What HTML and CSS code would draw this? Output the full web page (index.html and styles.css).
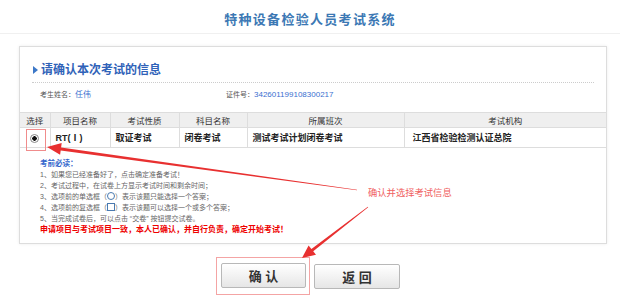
FILE: index.html
```html
<!DOCTYPE html>
<html>
<head>
    <title>特种设备检验人员考试系统</title>
    <meta charset="UTF-8">
    <link rel="stylesheet" href="styles.css">
</head>
<body>
    <div class="top">
        <h1>特种设备检验人员考试系统</h1>
    </div>

    <div class="panel">
        <div class="head"><span class="marker"></span>请确认本次考试的信息</div>
        <div class="info">
            <div class="info-item first">考生姓名：<span class="val name">任伟</span></div>
            <div class="info-item">证件号：<span class="val">342601199108300217</span></div>
        </div>

        <table class="exam">
            <colgroup>
                <col style="width:30px">
                <col style="width:60px">
                <col style="width:69px">
                <col style="width:68px">
                <col style="width:157px">
                <col style="width:202px">
            </colgroup>
            <tr>
                <th>选择</th>
                <th>项目名称</th>
                <th>考试性质</th>
                <th>科目名称</th>
                <th>所属班次</th>
                <th>考试机构</th>
            </tr>
            <tr>
                <td class="pick"><span class="radio"></span><span class="mark"></span></td>
                <td>RT(Ⅰ)</td>
                <td>取证考试</td>
                <td>闭卷考试</td>
                <td>测试考试计划闭卷考试</td>
                <td class="org">江西省检验检测认证总院</td>
            </tr>
        </table>

        <div class="notes">
            <div class="notes-title">考前必读：</div>
            <div>1、如果您已经准备好了，点击确定准备考试！</div>
            <div>2、考试过程中，在试卷上方显示考试时间和剩余时间；</div>
            <div>3、选项前的单选框（<span class="ico circle"></span>）表示该题只能选择一个答案；</div>
            <div>4、选项前的复选框（<span class="ico square"></span>）表示该题可以选择一个或多个答案；</div>
            <div>5、当完成试卷后，可以点击 “交卷” 按钮提交试卷。</div>
            <div class="warn">申请项目与考试项目一致，本人已确认，并自行负责，确定开始考试！</div>
        </div>
    </div>

    <div class="actions">
        <span class="btn-mark"><button class="btn">确 认</button></span>
        <button class="btn">返 回</button>
    </div>

    <span class="tip">确认并选择考试信息</span>
    <svg class="arrows" width="620" height="306" viewBox="0 0 620 306">
        <polygon points="357,190.3 357,189.7 61.1,147.4 61.7,143 47,147 60.1,154.8 60.7,150.4" fill="#e83030"/>
        <polygon points="368.2,207.2 367.8,206.8 311.4,248.9 308.6,245.4 302,258 316,254.8 313.2,251.3" fill="#e83030"/>
    </svg>
</body>
</html>
```

FILE: styles.css
```css
body {
    font-family: "Liberation Sans", "Noto Sans CJK SC", sans-serif;
    margin: 0;
    padding: 0;
    background: #ffffff;
    color: #333;
    position: relative;
}
.top {
    height: 34px;
    box-sizing: border-box;
    padding-top: 13px;
    border-bottom: 1px solid #f0f0f0;
    text-align: center;
}
.top h1 {
    margin: 0;
    font-size: 13px;
    line-height: 14px;
    letter-spacing: 1.3px;
    color: #3c78b4;
}
.panel {
    margin: 12px 13px 0 19px;
    border: 1px solid #dddddd;
    box-shadow: 0 0 3px rgba(0, 0, 0, 0.08);
    padding-bottom: 8px;
}
.head {
    margin: 0 12px;
    height: 36px;
    box-sizing: border-box;
    padding: 11px 0 0 1px;
    border-bottom: 1px dotted #cccccc;
    font-size: 12px;
    line-height: 16px;
    font-weight: bold;
    color: #2f62b8;
    display: flex;
    align-items: center;
    align-self: flex-start;
}
.marker {
    width: 0;
    height: 0;
    border-top: 4px solid transparent;
    border-bottom: 4px solid transparent;
    border-left: 5px solid #3c78c8;
    margin-right: 3px;
}
.info {
    display: flex;
    margin: 6px 0 11px;
    padding-left: 20px;
    font-size: 7px;
    line-height: 12px;
    color: #555;
}
.info-item.first {
    width: 186px;
}
.val {
    font-size: 8px;
    color: #3a6fd0;
}
.exam {
    width: 100%;
    table-layout: fixed;
    border-collapse: collapse;
}
.exam th,
.exam td {
    border: 1px solid #dddddd;
    white-space: nowrap;
    overflow: visible;
}
.exam tr th:first-child,
.exam tr td:first-child {
    border-left: none;
}
.exam tr th:last-child,
.exam tr td:last-child {
    border-right: none;
}
.exam th {
    height: 14px;
    padding: 0;
    background: #efefef;
    font-size: 8.5px;
    font-weight: normal;
    color: #333;
}
.exam td {
    height: 19px;
    padding: 0 0 0 5px;
    font-size: 9px;
    font-weight: bold;
    color: #222;
}
.exam td.org {
    padding-left: 8px;
}
.exam td.pick {
    position: relative;
    padding: 0;
    text-align: center;
}
.radio {
    display: inline-block;
    width: 7px;
    height: 7px;
    border: 1px solid #8a8a8a;
    border-radius: 50%;
    background: radial-gradient(circle, #111 0, #111 2px, #fff 2.5px);
    vertical-align: middle;
}
.mark {
    position: absolute;
    left: 6px;
    top: 1px;
    width: 18px;
    height: 20px;
    border: 1px solid #f08c8c;
}
.notes {
    margin-top: 10px;
    padding-left: 20px;
    font-size: 7px;
    line-height: 11px;
    color: #666;
}
.notes-title {
    font-size: 7.5px;
    font-weight: bold;
    color: #3366cc;
}
.ico {
    display: inline-block;
    width: 6px;
    height: 6px;
    border: 1px solid #4a7ab0;
    vertical-align: -1px;
}
.ico.circle {
    border-radius: 50%;
}
.warn {
    font-size: 8px;
    font-weight: bold;
    color: #ee0000;
}
.actions {
    display: flex;
    justify-content: center;
    align-items: center;
    gap: 4px;
    margin-top: 13px;
    padding-right: 4px;
}
.btn-mark {
    display: block;
    padding: 5px 3px 6px 4px;
    border: 1px solid #f4a4a4;
}
.btn {
    display: block;
    width: 86px;
    height: 25px;
    padding: 0;
    border: 1px solid #b8b8b8;
    border-radius: 2px;
    background: linear-gradient(#ffffff, #e6e6e6);
    font-family: "Liberation Sans", "Noto Sans CJK SC", sans-serif;
    font-size: 13px;
    font-weight: bold;
    color: #333;
}
.btn-mark .btn {
    width: 85px;
}
.tip {
    position: absolute;
    left: 368px;
    top: 187px;
    font-size: 9.3px;
    line-height: 12px;
    color: #f06060;
    white-space: nowrap;
}
.arrows {
    position: absolute;
    left: 0;
    top: 0;
    pointer-events: none;
}
```
